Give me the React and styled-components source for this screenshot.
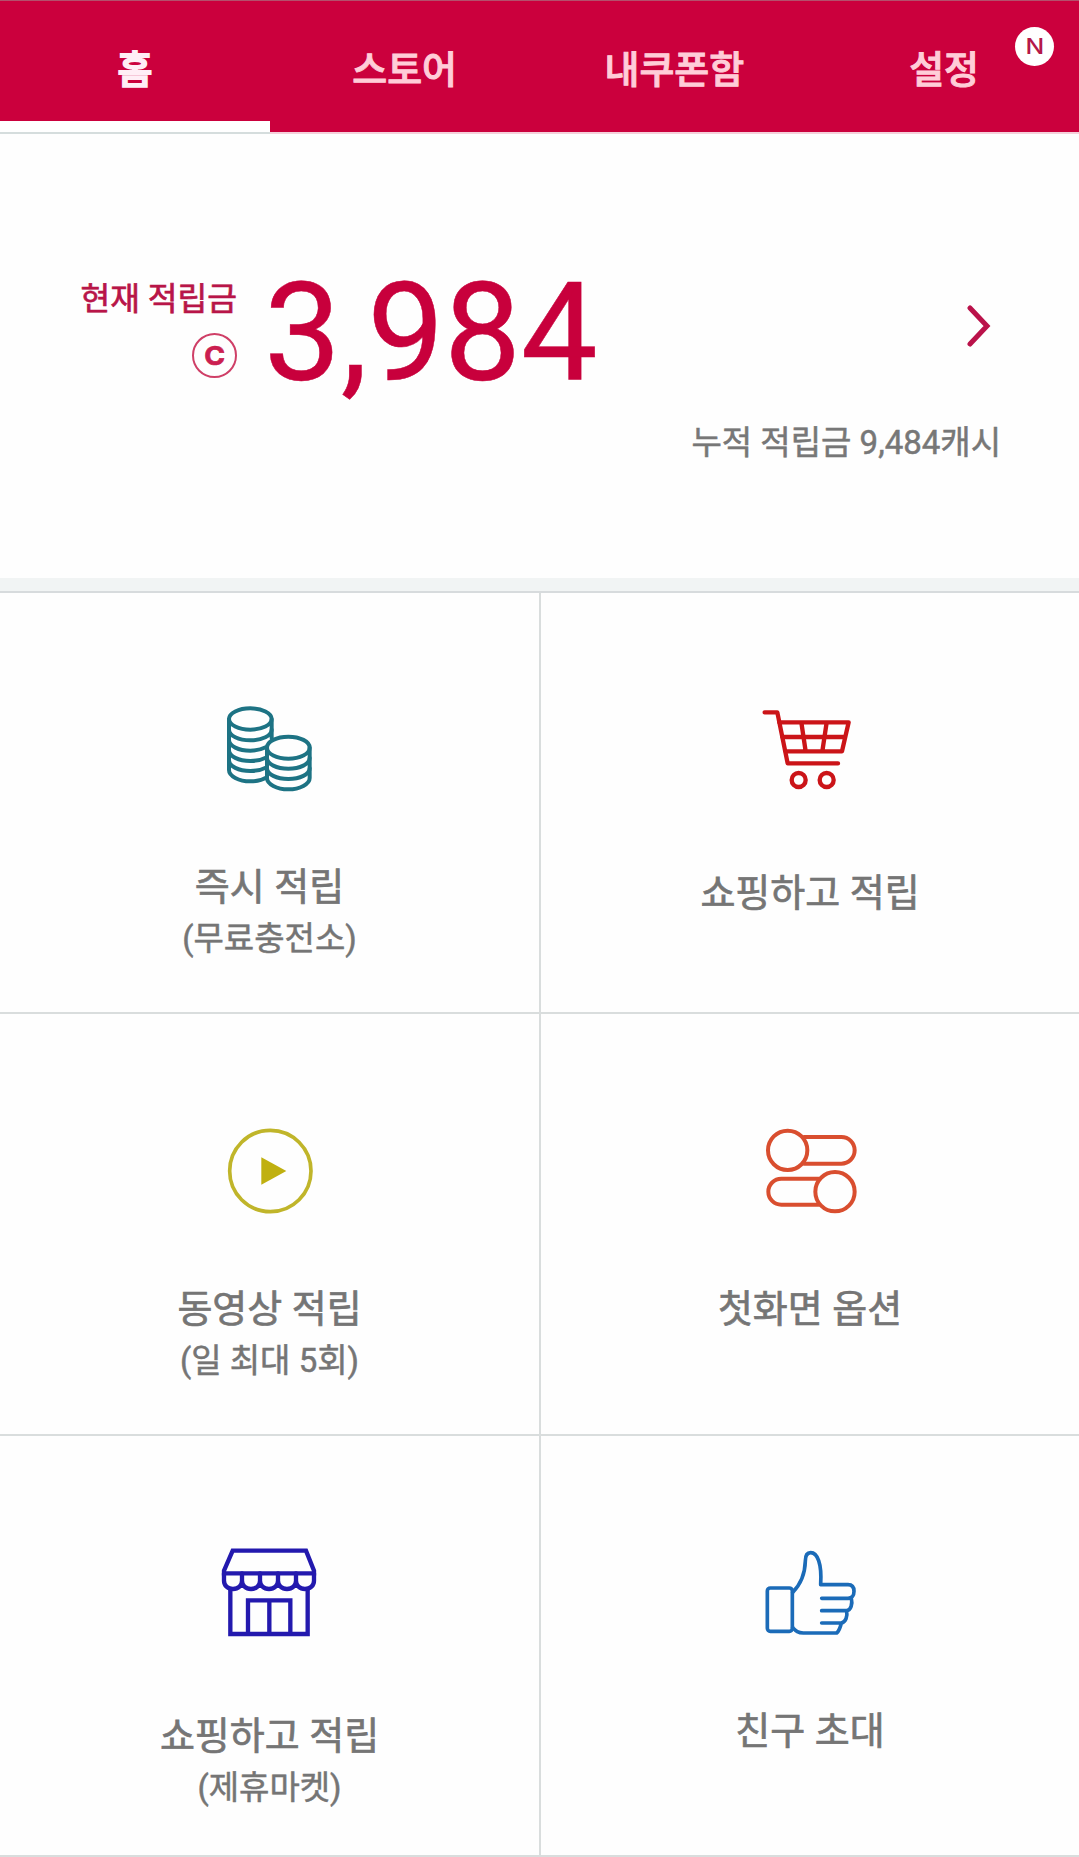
import React from "react";
import styled, { createGlobalStyle } from "styled-components";

const tabs = ["홈", "스토어", "내쿠폰함", "설정"];

const CoinsIcon = () => (
  <Icon viewBox="0 0 420 360" color="#1d7384" stroke="12">
    <ellipse cx="151" cy="87" rx="64" ry="32" />
    <path d="M87 88v152c0 18 29 34 64 34 20 0 38-5 49-12M215 88v57" />
    <path d="M87 119c0 18 29 32 64 32s64-14 64-32M87 150c0 18 29 32 64 32 18 0 34-4 46-10M87 181c0 18 29 32 64 32 18 0 34-4 46-10M87 211c0 18 29 32 64 32 18 0 34-4 46-10" />
    <ellipse cx="265" cy="173" rx="64" ry="33" />
    <path d="M201 173v91c0 18 29 34 64 34s64-16 64-34v-91" />
    <path d="M201 204c0 18 29 32 64 32s64-14 64-32M201 235c0 18 29 32 64 32s64-14 64-32" />
  </Icon>
);

const CartIcon = () => (
  <Icon viewBox="0 0 420 360" color="#cb1418" stroke="13">
    <path d="M74 67h38l31 153h151" />
    <path d="M118 97h208l-20 87H137M127 141h188M184 97l13 87M260 97l-13 87" />
    <circle cx="176" cy="270" r="21" />
    <circle cx="260" cy="270" r="21" />
  </Icon>
);

const PlayIcon = () => (
  <Icon viewBox="0 0 420 360" color="#c0b52a" stroke="11">
    <circle cx="211" cy="183" r="122" />
    <path d="M184 142l75 41-75 41z" fill="#c0b010" stroke="none" />
  </Icon>
);

const SwitchIcon = () => (
  <Icon viewBox="0 0 420 360" color="#d94e2f" stroke="12">
    <circle cx="143" cy="121" r="59" />
    <path d="M192 81h112a40 40 0 0 1 0 80H192" />
    <circle cx="285" cy="245" r="59" />
    <path d="M236 206H124a39 39 0 0 0 0 78h112" />
  </Icon>
);

const StoreIcon = () => (
  <Icon viewBox="0 0 420 390" height="130" color="#2319ae" stroke="13" join="miter">
    <path d="M98 62h220l24 60v8H72v-8z" />
    <path d="M72 130v22c0 14 11 25 27 25s27-11 27-25v-22M126 152c0 14 11 25 27 25s27-11 27-25v-22M180 152c0 14 11 25 27 25s27-11 27-25v-22M234 152c0 14 11 25 27 25s27-11 27-25v-22M288 152c0 14 11 25 27 25s27-11 27-25v-22" />
    <path d="M91 177v135h232V177M144 312V211h127v101M208 211v101" />
  </Icon>
);

const ThumbIcon = () => (
  <Icon viewBox="0 0 420 390" height="130" color="#1b6bb8" stroke="11">
    <rect x="82" y="174" width="75" height="130" rx="9" />
    <path d="M158 187c24-24 37-57 38-94 0-15 5-25 16-25 20 0 34 32 30 96h82c12 0 18 8 18 20s-6 21-18 21h-79" />
    <path d="M334 205c4 16-1 36-14 37h-75M320 242c3 18-3 34-16 37h-59M304 279c-3 13-8 25-14 30H190c-18 0-23-7-32-16" />
  </Icon>
);

const menu = [
  { icon: CoinsIcon, title: "즉시 적립", sub: "(무료충전소)", top: 97, gap: 49 },
  { icon: CartIcon, title: "쇼핑하고 적립", top: 97, gap: 55 },
  { icon: PlayIcon, title: "동영상 적립", sub: "(일 최대 5회)", top: 96, gap: 51 },
  { icon: SwitchIcon, title: "첫화면 옵션", top: 96, gap: 51 },
  { icon: StoreIcon, title: "쇼핑하고 적립", sub: "(제휴마켓)", top: 94, gap: 48 },
  { icon: ThumbIcon, title: "친구 초대", top: 94, gap: 43 }
];

const App = () => {
  return (
    <Page>
      <GlobalStyle />
      <TabBar>
        {tabs.map((tab, i) => (
          <Tab key={tab} $active={i === 0}>
            {tab}
          </Tab>
        ))}
        <NewBadge>
          <BadgeLetter>N</BadgeLetter>
        </NewBadge>
      </TabBar>
      <Summary>
        <BalanceRow>
          <BalanceLabel>
            현재 적립금
            <CashMark>
              <CashLetter>C</CashLetter>
            </CashMark>
          </BalanceLabel>
          <Balance>3,984</Balance>
          <Chevron viewBox="0 0 24 42">
            <path d="M3 3l17 18L3 39" />
          </Chevron>
        </BalanceRow>
        <Total>누적 적립금 9,484캐시</Total>
      </Summary>
      <Divider />
      <MenuGrid>
        {menu.map(({ icon: MenuIcon, title, sub, top, gap }, i) => (
          <MenuItem key={i} $top={top}>
            <MenuIcon />
            <MenuTitle $gap={gap}>{title}</MenuTitle>
            {sub && <MenuSub>{sub}</MenuSub>}
          </MenuItem>
        ))}
      </MenuGrid>
    </Page>
  );
};

/*
==== Component Styles ====
*/

const GlobalStyle = createGlobalStyle`
  * {
    box-sizing: border-box;
  }

  body {
    margin: 0;
    background: #fefefe;
    font-family: Roboto, "Noto Sans CJK KR", sans-serif;
  }
`;

const Page = styled.div`
  width: 1079px;
  height: 1857px;
  overflow: hidden;
  background: #fefefe;
`;

const TabBar = styled.nav`
  position: relative;
  display: grid;
  grid-template-columns: repeat(4, 1fr);
  height: 134px;
  background: #cb003d;
  border-top: 1px solid #b4506c;
  border-bottom: 2px solid #f5d0da;
`;

const Tab = styled.div`
  height: 133px;
  padding-top: 41px;
  text-align: center;
  font-size: 38px;
  line-height: 56px;
  font-weight: 500;
  color: ${props => (props.$active ? "#ffeef6" : "#ffcdd8")};
  -webkit-text-stroke: ${props => (props.$active ? "1.8px" : "1px")};
  border-bottom: ${props => (props.$active ? "2px solid #d5dddd" : "none")};
  box-shadow: ${props => (props.$active ? "inset 0 -11px #fff" : "none")};
`;

const NewBadge = styled.div`
  position: absolute;
  top: 26px;
  right: 25px;
  width: 39px;
  height: 39px;
  display: flex;
  align-items: center;
  justify-content: center;
  border-radius: 50%;
  background: #fff;
`;

const BadgeLetter = styled.span`
  font-family: Inter, sans-serif;
  font-size: 21px;
  font-weight: 500;
  line-height: 39px;
  color: #b5184a;
  transform: scaleX(1.18);
`;

const Summary = styled.section`
  height: 444px;
  padding: 133px 78px 0 80px;
`;

const BalanceRow = styled.div`
  display: flex;
  height: 140px;
`;

const BalanceLabel = styled.div`
  display: flex;
  flex-direction: column;
  align-items: flex-end;
  width: 157px;
  padding-top: 8px;
  font-size: 32.3px;
  line-height: 48px;
  white-space: nowrap;
  color: #b81548;
  -webkit-text-stroke: 0.7px;
`;

const CashMark = styled.div`
  display: flex;
  justify-content: center;
  width: 45px;
  height: 45px;
  margin-top: 10px;
  border: 2px solid #cf3f67;
  border-radius: 50%;
`;

const CashLetter = styled.span`
  font-family: Inter, sans-serif;
  font-size: 26px;
  font-weight: 700;
  line-height: 41px;
  color: #cb1e50;
  transform: scaleX(1.08);
`;

const Balance = styled.div`
  margin-left: 27px;
  font-size: 137px;
  line-height: 133px;
  letter-spacing: -0.3px;
  color: #c8003c;
  -webkit-text-stroke: 0.5px;
`;

const Chevron = styled.svg`
  width: 24px;
  height: 42px;
  margin: 38px 10px 0 auto;
  fill: none;
  stroke: #ba124a;
  stroke-width: 5;
  stroke-linecap: round;
`;

const Total = styled.div`
  margin-top: 11px;
  text-align: right;
  font-size: 33px;
  line-height: 50px;
  color: #777;
  -webkit-text-stroke: 0.5px;
`;

const Divider = styled.div`
  height: 15px;
  background: #f1f4f4;
  border-bottom: 2px solid #d7dbdd;
`;

const MenuGrid = styled.div`
  display: grid;
  grid-template-columns: 541px 538px;
  grid-template-rows: 421px 422px 421px;
`;

const MenuItem = styled.div`
  display: flex;
  flex-direction: column;
  align-items: center;
  padding-top: ${props => props.$top}px;
  border-bottom: 2px solid #d9dddd;

  &:nth-child(odd) {
    border-right: 2px solid #d9dddd;
  }
`;

const Icon = styled.svg`
  flex: none;
  width: 140px;
  height: ${props => props.height || 120}px;
  fill: none;
  stroke: ${props => props.color};
  stroke-width: ${props => props.stroke};
  stroke-linecap: round;
  stroke-linejoin: ${props => props.join || "round"};
`;

const MenuTitle = styled.div`
  margin-top: ${props => props.$gap}px;
  font-size: 38px;
  line-height: 56px;
  color: #757575;
  -webkit-text-stroke: 0.7px;
`;

const MenuSub = styled.div`
  font-size: 33px;
  line-height: 48px;
  color: #757575;
  -webkit-text-stroke: 0.5px;
`;

export default App;
